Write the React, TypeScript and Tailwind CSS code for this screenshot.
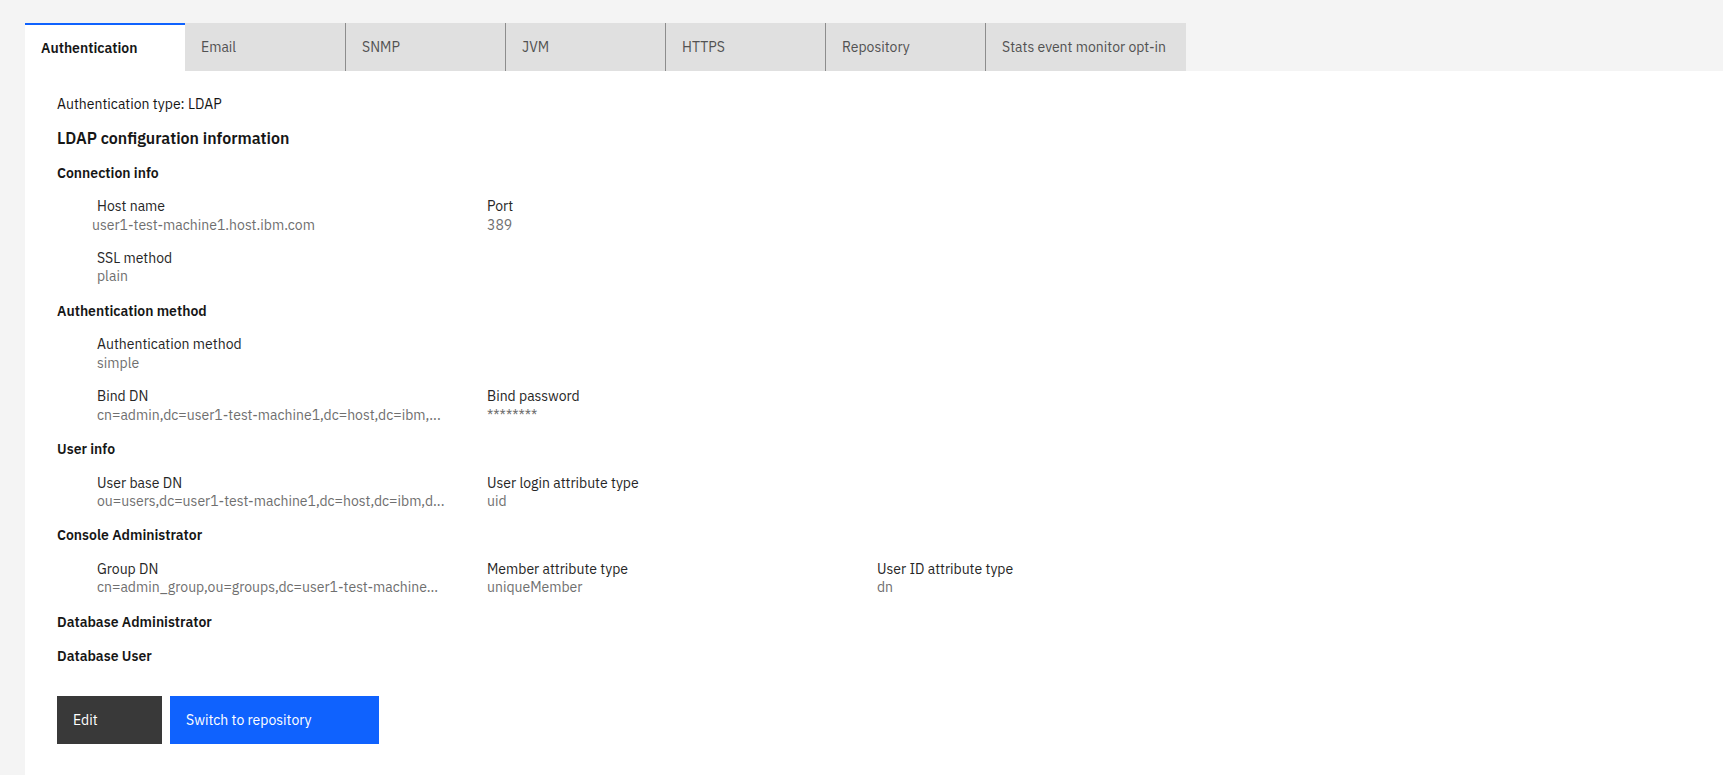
import type { FC } from 'react';

type Field = {
  label: string;
  value: string;
  shift?: boolean;
};

type Section = {
  title: string;
  rows: Field[][];
};

const tabs = ['Authentication', 'Email', 'SNMP', 'JVM', 'HTTPS', 'Repository', 'Stats event monitor opt-in'];

const sections: Section[] = [
  {
    title: 'Connection info',
    rows: [
      [
        { label: 'Host name', value: 'user1-test-machine1.host.ibm.com', shift: true },
        { label: 'Port', value: '389' },
      ],
      [{ label: 'SSL method', value: 'plain' }],
    ],
  },
  {
    title: 'Authentication method',
    rows: [
      [{ label: 'Authentication method', value: 'simple' }],
      [
        { label: 'Bind DN', value: 'cn=admin,dc=user1-test-machine1,dc=host,dc=ibm,...' },
        { label: 'Bind password', value: '********' },
      ],
    ],
  },
  {
    title: 'User info',
    rows: [
      [
        { label: 'User base DN', value: 'ou=users,dc=user1-test-machine1,dc=host,dc=ibm,d...' },
        { label: 'User login attribute type', value: 'uid' },
      ],
    ],
  },
  {
    title: 'Console Administrator',
    rows: [
      [
        { label: 'Group DN', value: 'cn=admin_group,ou=groups,dc=user1-test-machine...' },
        { label: 'Member attribute type', value: 'uniqueMember' },
        { label: 'User ID attribute type', value: 'dn' },
      ],
    ],
  },
  { title: 'Database Administrator', rows: [] },
  { title: 'Database User', rows: [] },
];

const FieldRow: FC<{ fields: Field[] }> = ({ fields }) => (
  <div className="grid grid-cols-[390px_390px_390px] pl-10">
    {fields.map((f) => (
      <div key={f.label} className="flex flex-col">
        <span className="text-[14px] leading-[17.3px] text-[#262626]">{f.label}</span>
        <span
          className={`text-[14px] leading-[18px] text-[#6f6f6f] whitespace-nowrap ${f.shift ? '-ml-[5px]' : ''}`}
        >
          {f.value}
        </span>
      </div>
    ))}
  </div>
);

export default function App() {
  return (
    <div
      className="min-h-screen flex flex-col bg-[#f4f4f4] pt-[23px] pl-[25px]"
      style={{ fontFamily: '"IBM Plex Sans", "Liberation Sans", Arial, sans-serif' }}
    >
      {/* tab strip */}
      <div className="flex h-12">
        {tabs.map((t, i) => {
          const selected = i === 0;
          const showDivider = i > 1;
          return (
            <div
              key={t}
              className={`flex items-center min-w-[160px] pl-4 pr-5 text-[14px] leading-[18px] ${
                selected
                  ? 'bg-white border-t-2 border-[#0f62fe] font-semibold text-[#161616]'
                  : 'bg-[#e0e0e0] text-[#525252]'
              } ${showDivider ? 'border-l border-[#8d8d8d]' : ''}`}
            >
              {t}
            </div>
          );
        })}
      </div>

      {/* panel */}
      <div className="flex-1 bg-white pl-8 pt-[23.5px] pb-8 text-[#161616]">
        <p className="text-[14px] leading-[18px]">Authentication type: LDAP</p>
        <h2 className="mt-[14.6px] text-[16px] leading-[22px] font-semibold">LDAP configuration information</h2>

        <div className="mt-[14.8px] flex flex-col gap-[16.5px]">
          {sections.map((s) => (
            <div key={s.title} className="flex flex-col gap-[16.5px]">
              <h3 className="text-[14px] leading-[18px] font-semibold">{s.title}</h3>
              {s.rows.map((r, i) => (
                <FieldRow key={i} fields={r} />
              ))}
            </div>
          ))}
        </div>

        <div className="mt-[31px] flex gap-2">
          <button className="h-12 w-[105px] pl-4 bg-[#393939] text-white text-[14px] text-left">Edit</button>
          <button className="h-12 w-[209px] pl-4 bg-[#0f62fe] text-white text-[14px] text-left">
            Switch to repository
          </button>
        </div>
      </div>
    </div>
  );
}
